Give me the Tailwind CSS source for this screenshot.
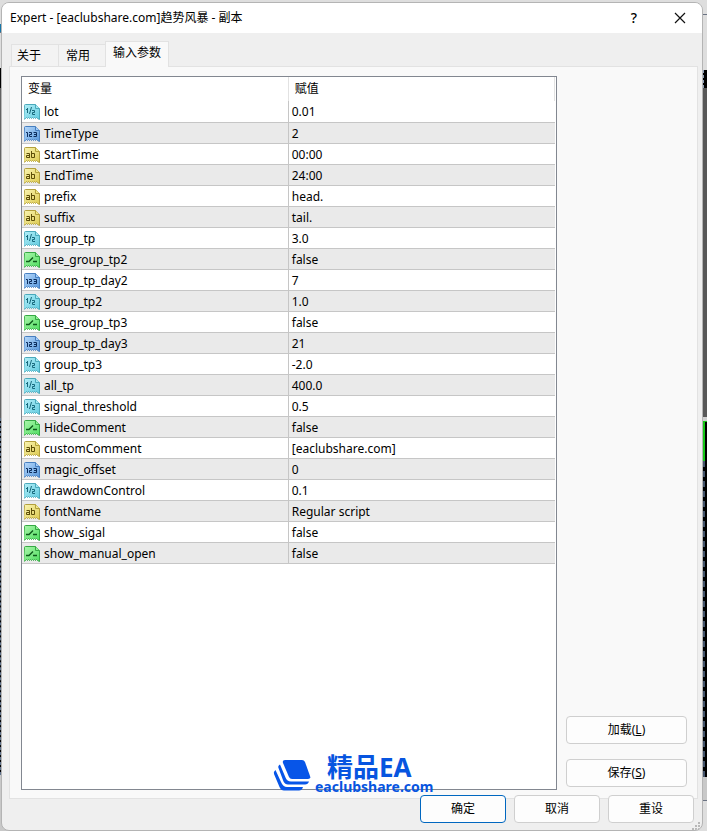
<!DOCTYPE html>
<html lang="zh-CN">

<head>
    <meta charset="utf-8">
    <title>Expert - [eaclubshare.com]趋势风暴 - 副本</title>
    <meta name="viewport" content="width=device-width, initial-scale=1.0">
    <script src="https://cdn.jsdelivr.net/npm/@tailwindcss/browser@4"></script>
</head>

<body class="relative h-screen min-h-[600px] overflow-hidden bg-[#dedede] font-['Noto_Sans','Noto_Sans_CJK_SC',sans-serif] text-xs text-black">
    <!-- Icons for the parameter types -->
    <svg class="absolute size-0" xmlns="http://www.w3.org/2000/svg">
        <defs>
            <linearGradient id="cyan" x2="1" y2="1"><stop stop-color="#b4eff8"/><stop offset="1" stop-color="#62cbdf"/></linearGradient>
            <linearGradient id="blue" x2="1" y2="1"><stop stop-color="#b9dafb"/><stop offset="1" stop-color="#5797dc"/></linearGradient>
            <linearGradient id="yellow" x2="1" y2="1"><stop stop-color="#fbf6b4"/><stop offset="1" stop-color="#dcc94f"/></linearGradient>
            <linearGradient id="green" x2="1" y2="1"><stop stop-color="#adf7ae"/><stop offset="1" stop-color="#4fdd60"/></linearGradient>
            <path id="sheet" d="M.5 1.500q0-1 1-1h10l4 4v11l-2-1-1-1-1 1-1-1-1 1-1-1-1 1-1-1-1 1-1-1-1 1-1-1-1 1-2 1z"/>
        </defs>
        <symbol id="i-double" viewBox="0 0 16 16">
            <use href="#sheet" fill="url(#cyan)" stroke="#4aa9bb"/>
            <path d="M11.500 .5v4h4" fill="#a5e8f2" stroke="#4aa9bb"/>
            <path d="M2 5.500h1M3.500 4v5M7.500 3l-2 7M8 6.500h2.500v2h-2v2H11" fill="none" stroke="#17697c"/>
        </symbol>
        <symbol id="i-int" viewBox="0 0 16 16">
            <use href="#sheet" fill="url(#blue)" stroke="#477fc0"/>
            <path d="M11.500 .5v4h4" fill="#a4ccf6" stroke="#477fc0"/>
            <path d="M2 6.500h1.500V11M5 6.500h2.500v2h-2v2H8M9.500 6.500h3v4h-3M10 8.500h2" fill="none" stroke="#0b2c5c"/>
        </symbol>
        <symbol id="i-string" viewBox="0 0 16 16">
            <use href="#sheet" fill="url(#yellow)" stroke="#b3a03c"/>
            <path d="M11.500 .5v4h4" fill="#f0e88b" stroke="#b3a03c"/>
            <path d="M2.500 6.500h3V11M5 8.500H2.500v2H5M7.500 4v6.500h3v-4H8" fill="none" stroke="#5d4e08"/>
        </symbol>
        <symbol id="i-bool" viewBox="0 0 16 16">
            <use href="#sheet" fill="url(#green)" stroke="#36a944"/>
            <path d="M11.500 .5v4h4" fill="#93ee97" stroke="#36a944"/>
            <path d="M2 9.500h3l4-4M9 9.500h4" fill="none" stroke="#0d5a1a" stroke-width="1.400"/>
        </symbol>
    </svg>

    <!-- Chart window behind the dialog -->
    <div class="absolute inset-0 flex justify-between">
        <div class="flex w-3 flex-col">
            <div class="h-6"></div>
            <div class="h-2 bg-[#1776a8]"></div>
            <div class="h-9 border-t border-gray-500"></div>
            <div class="h-5 bg-black"></div>
            <div class="h-[330px] bg-[#626262]"></div>
            <div class="flex-1 border-l border-dashed border-slate-500 bg-black"></div>
            <div class="h-14 bg-[#c8c8c8]"></div>
        </div>
        <div class="flex w-1 flex-col">
            <div class="h-3.5"></div>
            <div class="h-14 border-t border-gray-500"></div>
            <div class="h-[18px] border-l border-dashed border-slate-400 bg-black"></div>
            <div class="h-[329px] bg-[#585858]"></div>
            <div class="h-1 bg-[#d0d0d0]"></div>
            <div class="h-10 border-t border-l-2 border-[#18c818] bg-black"></div>
            <div class="flex-1 border-l-2 border-dashed border-slate-600 bg-black"></div>
            <div class="h-6 border-b border-gray-500 bg-[#c8c8c8]"></div>
            <div class="h-[30px]"></div>
        </div>
    </div>

    <!-- Dialog -->
    <main class="relative mr-1 ml-px flex h-full flex-col pt-0.5">
        <div class="flex min-h-0 flex-1 flex-col overflow-hidden rounded-lg border border-[#b4b4b4] bg-[#efefef]">
            <!-- Title bar -->
            <header class="flex h-[30px] shrink-0 items-center bg-white pr-4 pl-2">
                <h1 class="flex-1">Expert - [eaclubshare.com]趋势风暴 - 副本</h1>
                <button class="mr-8 w-4 text-sm font-medium" aria-label="帮助">?</button>
                <button aria-label="关闭">
                    <svg class="size-3" viewBox="0 0 12 12" fill="none" stroke="#111" stroke-width="1.200"><path d="M1 1l10 10M11 1L1 11"/></svg>
                </button>
            </header>

            <!-- Tabs -->
            <nav class="relative z-10 -mb-px flex shrink-0 items-end pt-2 pl-[9px]">
                <button class="h-[23px] w-12 border border-[#e2e2e2] bg-[#f3f3f3] pr-3">关于</button>
                <button class="-ml-px h-[23px] w-12 border border-[#e2e2e2] bg-[#f3f3f3] pr-2">常用</button>
                <button class="-ml-px h-[26px] w-16 border border-b-0 border-[#e2e2e2] bg-[#f9f9f9] pb-1">输入参数</button>
            </nav>

            <!-- Inputs page -->
            <section class="mr-1 ml-[7px] flex min-h-0 flex-1 border border-[#e2e2e2] bg-[#f9f9f9] pt-[9px] pr-2.5 pb-2 pl-[11px]">
                <div class="min-w-0 flex-1 overflow-hidden border border-[#828790] bg-white pr-px">
                    <table class="w-full table-fixed border-collapse text-left [&_td]:h-[21px] [&_td]:border-b [&_td]:border-[#c6c6c6] [&_td]:p-0 [&_td]:pt-0.5 [&_td]:leading-[18px] [&_td:first-child]:border-r [&_td:last-child]:pl-[3px] [&_tbody_tr:nth-child(even)]:bg-[#eaeaea] [&_svg]:mr-1 [&_svg]:ml-0.5 [&_svg]:inline-block [&_svg]:size-4 [&_svg]:align-[-4px]">
                        <thead>
                            <tr class="h-6">
                                <th class="w-1/2 border-r border-[#e2e2e2] pl-1.5 font-normal">变量</th>
                                <th class="border-r border-[#e2e2e2] pl-1.5 font-normal">赋值</th>
                            </tr>
                        </thead>
                        <tbody>
                            <tr><td><svg><use href="#i-double"/></svg>lot</td><td>0.01</td></tr>
                            <tr><td><svg><use href="#i-int"/></svg>TimeType</td><td>2</td></tr>
                            <tr><td><svg><use href="#i-string"/></svg>StartTime</td><td>00:00</td></tr>
                            <tr><td><svg><use href="#i-string"/></svg>EndTime</td><td>24:00</td></tr>
                            <tr><td><svg><use href="#i-string"/></svg>prefix</td><td>head.</td></tr>
                            <tr><td><svg><use href="#i-string"/></svg>suffix</td><td>tail.</td></tr>
                            <tr><td><svg><use href="#i-double"/></svg>group_tp</td><td>3.0</td></tr>
                            <tr><td><svg><use href="#i-bool"/></svg>use_group_tp2</td><td>false</td></tr>
                            <tr><td><svg><use href="#i-int"/></svg>group_tp_day2</td><td>7</td></tr>
                            <tr><td><svg><use href="#i-double"/></svg>group_tp2</td><td>1.0</td></tr>
                            <tr><td><svg><use href="#i-bool"/></svg>use_group_tp3</td><td>false</td></tr>
                            <tr><td><svg><use href="#i-int"/></svg>group_tp_day3</td><td>21</td></tr>
                            <tr><td><svg><use href="#i-double"/></svg>group_tp3</td><td>-2.0</td></tr>
                            <tr><td><svg><use href="#i-double"/></svg>all_tp</td><td>400.0</td></tr>
                            <tr><td><svg><use href="#i-double"/></svg>signal_threshold</td><td>0.5</td></tr>
                            <tr><td><svg><use href="#i-bool"/></svg>HideComment</td><td>false</td></tr>
                            <tr><td><svg><use href="#i-string"/></svg>customComment</td><td>[eaclubshare.com]</td></tr>
                            <tr><td><svg><use href="#i-int"/></svg>magic_offset</td><td>0</td></tr>
                            <tr><td><svg><use href="#i-double"/></svg>drawdownControl</td><td>0.1</td></tr>
                            <tr><td><svg><use href="#i-string"/></svg>fontName</td><td>Regular script</td></tr>
                            <tr><td><svg><use href="#i-bool"/></svg>show_sigal</td><td>false</td></tr>
                            <tr><td><svg><use href="#i-bool"/></svg>show_manual_open</td><td>false</td></tr>
                        </tbody>
                    </table>
                </div>
                <div class="ml-[9px] flex w-[121px] shrink-0 flex-col justify-end gap-[15px] pb-[3px]">
                    <button class="h-7 rounded border border-[#cfcfcf] bg-[#fdfdfd]">加载(<u>L</u>)</button>
                    <button class="h-7 rounded border border-[#cfcfcf] bg-[#fdfdfd]">保存(<u>S</u>)</button>
                </div>
            </section>

            <!-- Dialog buttons -->
            <footer class="relative z-10 -mt-1 flex shrink-0 justify-end gap-2 pr-2 pb-[7px]">
                <button class="h-7 w-[86px] rounded border border-[#0067c0] bg-[#fdfdfd]">确定</button>
                <button class="h-7 w-[86px] rounded border border-[#cfcfcf] bg-[#fdfdfd]">取消</button>
                <button class="h-7 w-[86px] rounded border border-[#cfcfcf] bg-[#fdfdfd]">重设</button>
                <svg class="absolute right-0.5 bottom-0 size-2" viewBox="0 0 8 8" fill="#b8b8b8"><path d="M6 0h2v2H6zM3 3h2v2H3zM6 3h2v2H6zM0 6h2v2H0zM3 6h2v2H3zM6 6h2v2H6z"/></svg>
            </footer>
        </div>
    </main>

    <!-- Watermark -->
    <div class="pointer-events-none absolute bottom-9 left-[273px] z-20 flex items-center text-[#0755e0]">
        <svg class="h-8 w-[38px]" viewBox="0 0 38 32" fill="#0755e8">
            <path d="M12 1h17q2 0 3 2l5 14q1 3-2 3H19q-2 0-3-2L10 4q-1-3 2-3z"/>
            <path d="M7 5.500l5.500 13q1.500 4 5.500 4h18q-1 3-4 3H15q-3 0-4.500-3L5.500 9q-1-2 1.500-3.500z"/>
            <path d="M2.500 11l5.500 12q2 5 6 5h16q-1 3.500-4 3.500H11q-3 0-4.500-3.500L1 15q-1-2 1.500-4z"/>
        </svg>
        <div class="ml-1 flex flex-col">
            <span class="ml-3 text-[26px] leading-6 font-bold">精品EA</span>
            <span class="text-sm leading-4 font-bold">eaclubshare.com</span>
        </div>
    </div>
</body>

</html>
